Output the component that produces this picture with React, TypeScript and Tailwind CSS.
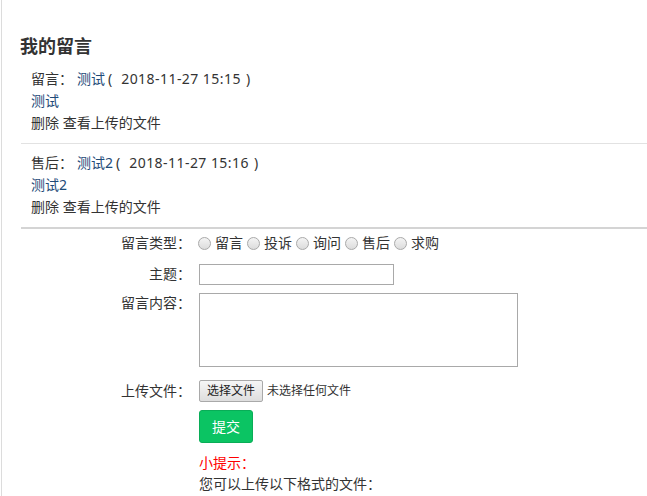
const font = { fontFamily: '"Noto Sans", "Noto Sans CJK SC", sans-serif' };

interface Message {
  kind: string;
  title: string;
  time: string;
  body: string;
  last?: boolean;
}

const messages: Message[] = [
  { kind: '留言', title: '测试', time: '2018-11-27 15:15', body: '测试' },
  { kind: '售后', title: '测试2', time: '2018-11-27 15:16', body: '测试2', last: true },
];

const types = ['留言', '投诉', '询问', '售后', '求购'];

const Radio = () => (
  <span className="inline-block w-[13px] h-[13px] rounded-full border border-[#a9a9a9] bg-gradient-to-b from-[#f4f4f4] to-[#dcdcdc] shrink-0" />
);

const Label = ({ text }: { text: string }) => (
  <div className="w-[190px] shrink-0 text-right leading-[22px]">{text}</div>
);

const App = () => {
  return (
    <div
      className="min-h-[496px] w-[647px] bg-white border-l border-[#dcdcdc] ml-px text-[14px] text-[#333] overflow-hidden [text-spacing-trim:space-all]"
      style={font}
    >
      <h2 className="pt-[34px] pl-[18px] text-[18px] leading-[24px] font-bold text-[#333]">我的留言</h2>

      {/* message list */}
      <div className="mt-[10px]">
        {messages.map((m) => (
          <div
            key={m.time}
            className={`ml-[19px] pl-[10px] pb-[9px] leading-[22px] ${m.last ? 'border-b-2 border-[#d4d4d4] pt-[8px]' : 'border-b border-[#e2e2e2]'}`}
          >
            <div>
              {m.kind}：<span className="ml-[4px] text-[#1d4a78]">{m.title}</span>
              <span className="ml-[3px] mr-[9px]">(</span>
              <span className="tracking-[0.45px]">{m.time}</span>
              <span className="ml-[5px]">)</span>
            </div>
            <div className="text-[#1d4a78]">{m.body}</div>
            <div>删除 查看上传的文件</div>
          </div>
        ))}
      </div>

      {/* form */}
      <div className="-ml-px mt-[3px]">
        <div className="flex items-center">
          <Label text="留言类型：" />
          <div className="ml-[7px] flex items-center leading-[22px]">
            {types.map((t) => (
              <span key={t} className="flex items-center">
                <Radio />
                <span className="ml-[4px] mr-[4px]">{t}</span>
              </span>
            ))}
          </div>
        </div>

        <div className="flex items-center mt-[9px]">
          <Label text="主题：" />
          <input
            type="text"
            className="ml-[8px] w-[195px] h-[21px] border border-[#a9a9a9] outline-none"
          />
        </div>

        <div className="flex items-start mt-[8px]">
          <div className="-mt-[1px]">
            <Label text="留言内容：" />
          </div>
          <textarea className="ml-[8px] w-[319px] h-[74px] border border-[#a9a9a9] outline-none resize-none" />
        </div>

        <div className="flex items-center mt-[13px]">
          <Label text="上传文件：" />
          <div className="ml-[8px] flex items-center text-[12px]">
            <span className="h-[22px] px-[7px] flex items-center border border-[#a9a9a9] rounded-[2px] bg-gradient-to-b from-[#f6f6f6] to-[#dedede] text-[#222]">
              选择文件
            </span>
            <span className="ml-[4px] text-[#333]">未选择任何文件</span>
          </div>
        </div>

        <div className="ml-[198px]">
          <button className="mt-[8px] w-[54px] h-[33px] rounded-[3px] bg-[#0bc463] border border-[#09ad57] text-white text-[14px]">
            提交
          </button>
          <div className="mt-[9px] leading-[21px] text-[#ff0000]">小提示：</div>
          <div className="leading-[21px]">您可以上传以下格式的文件：</div>
        </div>
      </div>
    </div>
  );
};

export default App;
